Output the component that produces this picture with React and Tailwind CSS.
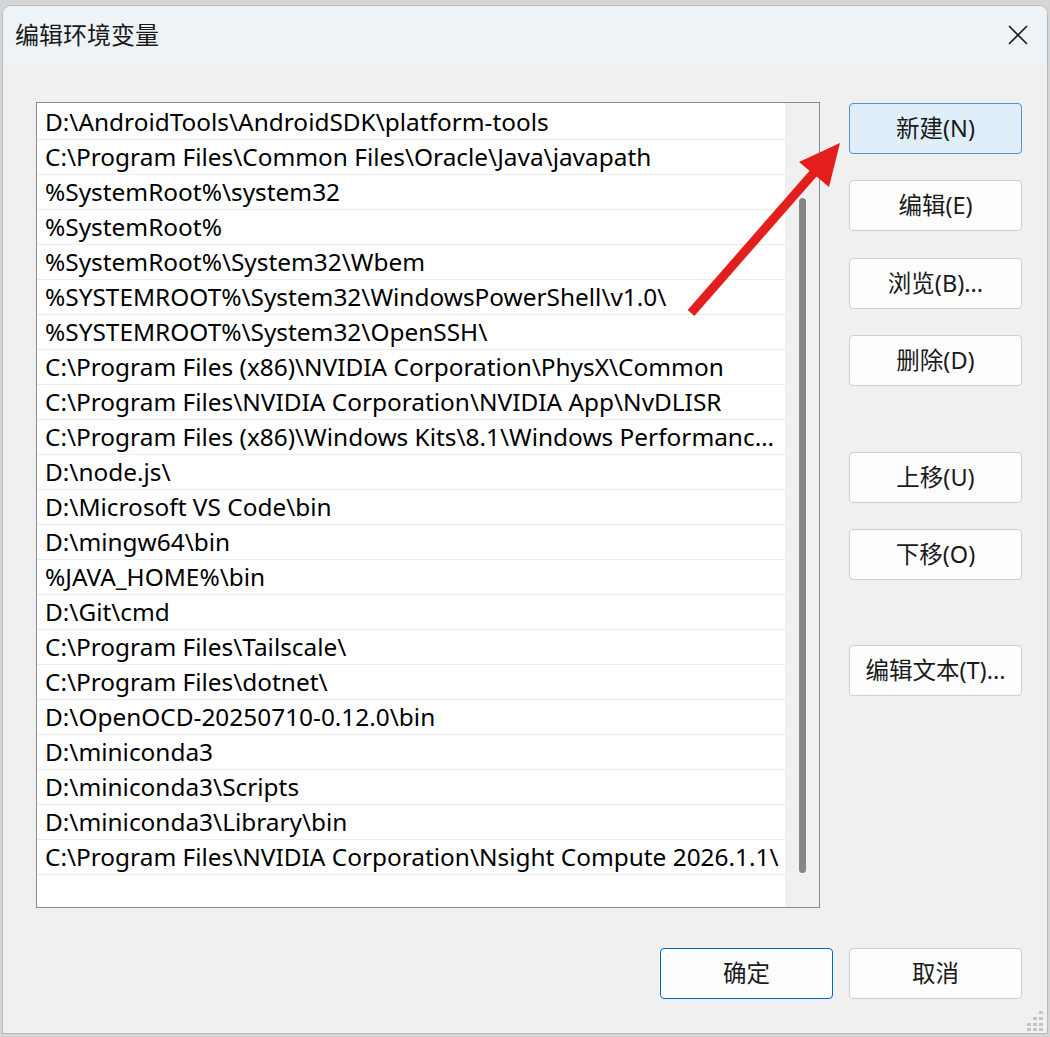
import React from "react";

const paths = [
  "D:\\AndroidTools\\AndroidSDK\\platform-tools",
  "C:\\Program Files\\Common Files\\Oracle\\Java\\javapath",
  "%SystemRoot%\\system32",
  "%SystemRoot%",
  "%SystemRoot%\\System32\\Wbem",
  "%SYSTEMROOT%\\System32\\WindowsPowerShell\\v1.0\\",
  "%SYSTEMROOT%\\System32\\OpenSSH\\",
  "C:\\Program Files (x86)\\NVIDIA Corporation\\PhysX\\Common",
  "C:\\Program Files\\NVIDIA Corporation\\NVIDIA App\\NvDLISR",
  "C:\\Program Files (x86)\\Windows Kits\\8.1\\Windows Performanc…",
  "D:\\node.js\\",
  "D:\\Microsoft VS Code\\bin",
  "D:\\mingw64\\bin",
  "%JAVA_HOME%\\bin",
  "D:\\Git\\cmd",
  "C:\\Program Files\\Tailscale\\",
  "C:\\Program Files\\dotnet\\",
  "D:\\OpenOCD-20250710-0.12.0\\bin",
  "D:\\miniconda3",
  "D:\\miniconda3\\Scripts",
  "D:\\miniconda3\\Library\\bin",
  "C:\\Program Files\\NVIDIA Corporation\\Nsight Compute 2026.1.1\\",
];

const font = { fontFamily: '"Noto Sans", "Noto Sans CJK SC", sans-serif' };

function Btn({ children, variant = "plain", className = "" }) {
  const look =
    variant === "hover"
      ? "bg-[#e0eef9] border-[#4f94d4]"
      : variant === "default"
      ? "bg-[#fdfdfd] border-[#0067c0]"
      : "bg-[#fdfdfd] border-[#d0d0d0]";
  return (
    <div
      className={`w-[173px] h-[51px] rounded-[4px] border flex items-center justify-center text-[23.5px] text-[#1a1a1a] ${look} ${className}`}
    >
      {children}
    </div>
  );
}

export default function App() {
  return (
    <div className="w-[1050px] h-[1037px] bg-[#d6d6d6] relative overflow-hidden" style={font}>
      <div className="absolute left-[2px] top-[5px] w-[1046px] h-[1029px] rounded-t-[9px] border border-[#b9b9b9] bg-[#f0f0f0] flex flex-col overflow-hidden">
        {/* title bar */}
        <div className="h-[57px] bg-[#eef3f8] flex items-center justify-between pl-[12px] pr-[18px] shrink-0">
          <span className="text-[24px] text-[#1a1a1a]">编辑环境变量</span>
          <svg width="22" height="22" viewBox="0 0 22 22">
            <path d="M2 2 L20 20 M20 2 L2 20" stroke="#1c1c1c" strokeWidth="1.6" />
          </svg>
        </div>

        {/* body */}
        <div className="flex flex-col pt-[39px] pl-[33px] pr-[25px]">
          <div className="flex gap-[29px]">
            {/* list box */}
            <div className="w-[784px] h-[806px] border border-[#8a8a8a] bg-white flex">
              <div className="flex-1 min-w-0 flex flex-col pt-[2px] overflow-hidden">
                {paths.map((p, i) => (
                  <div
                    key={i}
                    className="h-[35px] shrink-0 border-b border-[#ececec] flex items-center pl-[8px] text-[24.4px] text-black whitespace-nowrap overflow-hidden"
                  >
                    <span className="block shrink-0">{p}</span>
                  </div>
                ))}
              </div>
              <div className="w-[34px] shrink-0 bg-[#f0f0f0] flex justify-center pt-[95px] pb-[34px]">
                <div className="w-[7px] h-full rounded-full bg-[#868686]" />
              </div>
            </div>

            {/* side buttons */}
            <div className="flex flex-col pt-[1px]">
              <Btn variant="hover">新建(N)</Btn>
              <Btn className="mt-[26px]">编辑(E)</Btn>
              <Btn className="mt-[27px]">浏览(B)...</Btn>
              <Btn className="mt-[26px]">删除(D)</Btn>
              <Btn className="mt-[66px]">上移(U)</Btn>
              <Btn className="mt-[26px]">下移(O)</Btn>
              <Btn className="mt-[65px]">编辑文本(T)...</Btn>
            </div>
          </div>

          {/* dialog buttons */}
          <div className="flex justify-end gap-[16px] mt-[40px]">
            <Btn variant="default">确定</Btn>
            <Btn>取消</Btn>
          </div>
        </div>

        {/* resize grip */}
        <svg className="absolute right-[2px] bottom-[2px]" width="22" height="22" viewBox="0 0 22 22">
          {[
            [16, 2], [10, 8], [16, 8], [4, 14], [10, 14], [16, 14], [4, 19], [10, 19], [16, 19],
          ].map(([x, y], i) => (
            <rect key={i} x={x} y={y} width="4" height="3" fill="#c4c4c4" />
          ))}
        </svg>
      </div>

      {/* annotation arrow */}
      <svg className="absolute left-0 top-0 pointer-events-none" width="1050" height="1037">
        <line x1="691" y1="313" x2="818" y2="168" stroke="#e41d1d" strokeWidth="9" />
        <polygon points="840,143 799,162 829,187" fill="#e41d1d" />
      </svg>
    </div>
  );
}
